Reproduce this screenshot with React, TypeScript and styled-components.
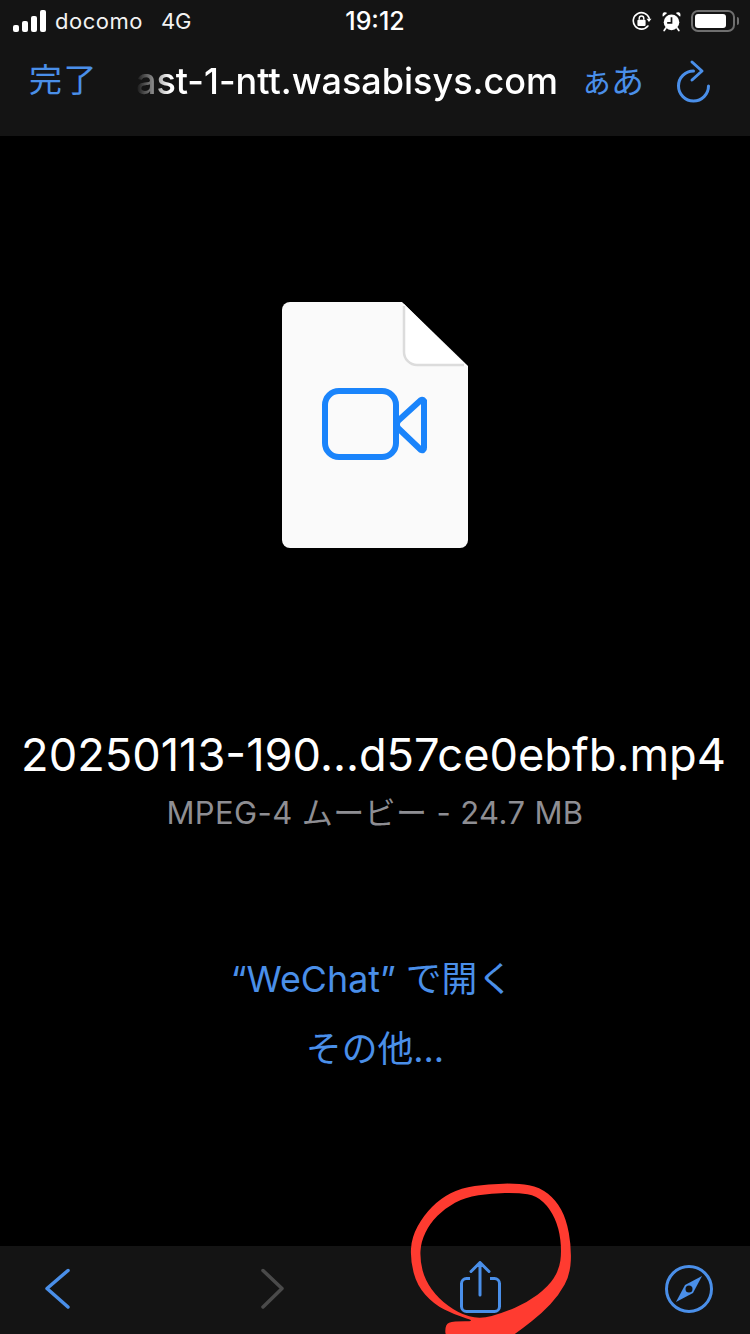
import styled, { createGlobalStyle } from "styled-components";

const LATIN = `Inter, "Noto Sans CJK JP", sans-serif`;
const CJK = `"Noto Sans CJK JP", Inter, sans-serif`;
const BLUE = "#4a8fe9";

type Pt = [number, number];

// hand-traced outline of the red marker ring, in 3x crop units
const ringOuter: Pt[] = [
  [122, 482], [120, 432], [145, 424], [215, 424], [150, 405], [86, 372], [36, 316], [16, 240],
  [20, 172], [56, 106], [106, 56], [168, 24], [250, 12], [340, 10], [404, 21], [454, 62],
  [484, 118], [499, 200], [496, 282], [462, 345], [410, 400], [350, 448], [300, 482],
];
const ringInner: Pt[] = [
  [45, 240], [48, 185], [75, 130], [120, 85], [180, 52], [260, 40], [340, 38], [395, 48],
  [435, 85], [462, 145], [470, 215], [462, 270], [430, 320], [365, 368], [295, 398], [225, 418],
  [160, 400], [100, 355], [60, 300],
];

const smoothLoop = (pts: Pt[]) => {
  const mid = (a: Pt, b: Pt) => `${(a[0] + b[0]) / 2} ${(a[1] + b[1]) / 2}`;
  let d = `M${mid(pts[pts.length - 1], pts[0])}`;
  pts.forEach((p, i) => {
    d += `Q${p[0]} ${p[1]} ${mid(p, pts[(i + 1) % pts.length])}`;
  });
  return d + "Z";
};

const GlobalStyle = createGlobalStyle`
  html, body {
    margin: 0;
    padding: 0;
    background: #000;
  }
`;

const Screen = styled.div`
  position: relative;
  width: 750px;
  height: 1334px;
  overflow: hidden;
  display: flex;
  flex-direction: column;
  background: #000;
  font-family: ${LATIN};
`;

const Header = styled.header`
  height: 136px;
  flex-shrink: 0;
  background: #141414;
  display: flex;
  flex-direction: column;
`;

const StatusBar = styled.div`
  height: 42px;
  display: grid;
  grid-template-columns: 1fr auto 1fr;
  align-items: center;
  padding: 0 13px;
  color: #fff;
`;

const StatusLeft = styled.div`
  display: flex;
  align-items: center;
  font-size: 22px;
  color: #f2f2f2;
`;

const Carrier = styled.span`
  margin-left: 8px;
  letter-spacing: 0.5px;
`;

const Network = styled.span`
  margin-left: 18px;
`;

const Clock = styled.div`
  font-size: 25px;
  font-weight: 500;
`;

const StatusRight = styled.div`
  display: flex;
  align-items: center;
  justify-content: flex-end;
  gap: 10px;
`;

const Battery = styled.div`
  position: relative;
  width: 44px;
  height: 22px;
  box-sizing: border-box;
  border: 2px solid #6f6f6f;
  border-radius: 7px;
  padding: 2px;
  margin-right: 2px;

  &::before {
    content: "";
    display: block;
    height: 100%;
    background: #fff;
    border-radius: 3px;
    margin-right: 5px;
  }

  &::after {
    content: "";
    position: absolute;
    right: -6px;
    top: 5px;
    width: 2px;
    height: 8px;
    border-radius: 0 2px 2px 0;
    background: #6f6f6f;
  }
`;

const NavRow = styled.div`
  display: flex;
  align-items: center;
  height: 78px;
  padding: 0 39px 0 29px;
`;

const DoneLabel = styled.span`
  font-family: ${CJK};
  font-size: 33px;
  color: ${BLUE};
  letter-spacing: 1.5px;
  margin-bottom: 6px;
`;

const UrlSlot = styled.div`
  flex: 1;
  min-width: 0;
  display: flex;
  justify-content: flex-end;
`;

const UrlText = styled.span`
  white-space: nowrap;
  font-size: 36px;
  font-weight: 500;
  color: #fff;
  mask-image: linear-gradient(to right, transparent 0, #000 34px);
`;

const ReaderLabel = styled.span`
  margin-left: 22px;
  font-family: ${CJK};
  color: ${BLUE};
  font-size: 33px;
  letter-spacing: -2px;
  margin-bottom: 4px;
`;

const ReloadIcon = styled.svg`
  margin-left: 33px;
  flex-shrink: 0;
`;

const Main = styled.main`
  flex: 1;
  display: flex;
  flex-direction: column;
  align-items: center;
  padding-top: 166px;
`;

const FileIcon = styled.svg`
  filter: blur(0.5px);
`;

const FileName = styled.div`
  margin-top: 178px;
  padding-right: 3px;
  color: #fff;
  font-size: 45.2px;
  line-height: 58px;
  white-space: nowrap;
`;

const FileMeta = styled.div`
  margin-top: 14px;
  color: #8e8e93;
  font-size: 31px;
  line-height: 30px;
  letter-spacing: 0.4px;
`;

const ActionLink = styled.a<{ $gap: number; $trail?: number }>`
  margin-top: ${(p) => p.$gap}px;
  padding-right: ${(p) => p.$trail ?? 0}px;
  color: ${BLUE};
  font-size: 35.8px;
  line-height: 44px;
`;

const Toolbar = styled.footer`
  height: 88px;
  flex-shrink: 0;
  background: #141414;
  display: grid;
  grid-template-columns: 215px 208px 209px 48px;
  align-items: center;
  padding-left: 33px;
`;

const ToolButton = styled.button`
  width: 48px;
  height: 88px;
  padding: 0;
  border: 0;
  background: none;
  display: flex;
  align-items: center;
  justify-content: center;
`;

const Scribble = styled.svg`
  position: absolute;
  left: 405px;
  top: 1180px;
  pointer-events: none;
`;

const SignalIcon = () => (
  <svg width="34" height="22" viewBox="0 0 34 22" fill="#fff">
    <rect x="0" y="15" width="6" height="7" rx="2" />
    <rect x="9" y="11" width="6" height="11" rx="2" />
    <rect x="18" y="6" width="6" height="16" rx="2" />
    <rect x="27" y="0" width="6" height="22" rx="2" />
  </svg>
);

const RotationLockIcon = () => (
  <svg width="21" height="20" viewBox="0 0 22 22" fill="none">
    <path d="M18 16.500A9 9 0 1 1 19.500 8" stroke="#fff" strokeWidth="1.800" strokeLinecap="round" />
    <path d="M16.500 8.500h5.500l-2.800 3.500z" fill="#fff" />
    <rect x="6.500" y="9.500" width="9" height="7" rx="1.200" fill="#fff" />
    <path d="M8.500 9.500V8a2.500 2.500 0 0 1 5 0v1.500" stroke="#fff" strokeWidth="1.600" />
  </svg>
);

const AlarmIcon = () => (
  <svg width="19" height="21" viewBox="0 0 22 24" fill="none">
    <circle cx="11" cy="13" r="9" fill="#fff" />
    <path d="M11 7v6.500H6" stroke="#141414" strokeWidth="2" />
    <path d="M1 6.500 6 2.200C4 .8 1.600 1.300.8 3c-.4 1-.3 2.400.2 3.500zM21 6.500 16 2.200c2-1.400 4.400-.9 5.200.8.400 1 .3 2.400-.2 3.500z" fill="#fff" />
    <path d="M4.500 19.500 2.500 22.500M17.500 19.500l2 3" stroke="#fff" strokeWidth="2" strokeLinecap="round" />
  </svg>
);

const App = () => (
  <Screen>
    <GlobalStyle />
    <Header>
      <StatusBar>
        <StatusLeft>
          <SignalIcon />
          <Carrier>docomo</Carrier>
          <Network>4G</Network>
        </StatusLeft>
        <Clock>19:12</Clock>
        <StatusRight>
          <RotationLockIcon />
          <AlarmIcon />
          <Battery />
        </StatusRight>
      </StatusBar>
      <NavRow>
        <DoneLabel>完了</DoneLabel>
        <UrlSlot>
          <UrlText>ast-1-ntt.wasabisys.com</UrlText>
        </UrlSlot>
        <ReaderLabel>ぁあ</ReaderLabel>
        <ReloadIcon width="36" height="46" viewBox="0 0 36 46" fill="none">
          <path
            d="M18.500 13A15 15 0 1 0 33.500 28"
            stroke={BLUE}
            strokeWidth="3"
            strokeLinecap="round"
          />
          <path
            d="M17 4l10 9-10 9"
            stroke={BLUE}
            strokeWidth="3"
            strokeLinecap="round"
            strokeLinejoin="round"
          />
        </ReloadIcon>
      </NavRow>
    </Header>

    <Main>
      <FileIcon width="186" height="246" viewBox="0 0 186 246" fill="none">
        <path
          d="M8 0H120L186 64V238a8 8 0 0 1-8 8H8a8 8 0 0 1-8-8V8a8 8 0 0 1 8-8z"
          fill="#fafafa"
        />
        <path d="M122 2V52a12 12 0 0 0 12 12H184z" fill="#fff" />
        <path
          d="M122 4V50a13 13 0 0 0 13 13H182"
          stroke="#dcdcdc"
          strokeWidth="2.500"
        />
        <rect
          x="43"
          y="89"
          width="71"
          height="66"
          rx="14"
          stroke="#1a84fb"
          strokeWidth="6"
        />
        <path
          d="M117 118 139 98a2 2 0 0 1 3 2V146a2 2 0 0 1-3 2L117 127a6 6 0 0 1 0-9z"
          stroke="#1a84fb"
          strokeWidth="6"
          strokeLinejoin="round"
        />
      </FileIcon>
      <FileName>20250113-190...d57ce0ebfb.mp4</FileName>
      <FileMeta>MPEG-4 ムービー - 24.7 MB</FileMeta>
      <ActionLink $gap={129} $trail={6}>“WeChat” で開く</ActionLink>
      <ActionLink $gap={26}>その他...</ActionLink>
    </Main>

    <Toolbar>
      <ToolButton>
        <svg width="26" height="44" viewBox="0 0 26 44" fill="none">
          <path d="M24 2.500 3 20.500 24 39" stroke={BLUE} strokeWidth="3.500" strokeLinecap="round" strokeLinejoin="round" />
        </svg>
      </ToolButton>
      <ToolButton>
        <svg width="26" height="44" viewBox="0 0 26 44" fill="none">
          <path d="M4 2.500 23 20.500 4 39" stroke="#4a4a4a" strokeWidth="3.500" strokeLinecap="round" strokeLinejoin="round" />
        </svg>
      </ToolButton>
      <ToolButton>
        <svg width="44" height="58" viewBox="0 0 44 58" fill="none">
          <path d="M12 17.500H8.500a5 5 0 0 0-5 5v23a5 5 0 0 0 5 5h28a5 5 0 0 0 5-5v-23a5 5 0 0 0-5-5H32" stroke={BLUE} strokeWidth="3" />
          <path d="M22 34V2M13 10.500l9-9 9 9" stroke={BLUE} strokeWidth="3" strokeLinecap="round" strokeLinejoin="round" />
        </svg>
      </ToolButton>
      <ToolButton>
        <svg width="48" height="50" viewBox="0 0 48 50" fill="none">
          <circle cx="24" cy="24" r="22.500" stroke={BLUE} strokeWidth="3" />
          <path d="M37 11 28 28 11 37 20 20z" fill={BLUE} />
          <circle cx="24" cy="24" r="3.500" fill="#141414" />
        </svg>
      </ToolButton>
    </Toolbar>

    <Scribble width="175" height="154" viewBox="0 0 525 462">
      <path
        d={smoothLoop(ringOuter) + smoothLoop(ringInner)}
        fill="#ff3b30"
        fillRule="evenodd"
      />
    </Scribble>
  </Screen>
);

export default App;
